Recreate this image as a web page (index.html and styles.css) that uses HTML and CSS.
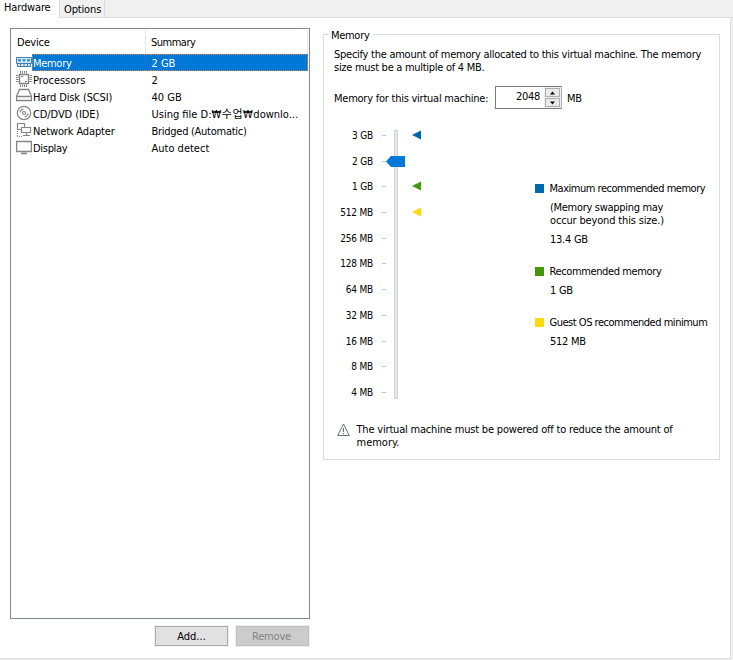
FILE: index.html
```html
<!DOCTYPE html>
<html lang="en">
<head>
<meta charset="utf-8">
<title>Virtual Machine Settings</title>
<link rel="stylesheet" href="styles.css">
</head>
<body>
<nav class="tabs">
  <span class="tab active">Hardware</span>
  <span class="tab">Options</span>
</nav>
<main class="panel">
  <section class="hardware">
    <div class="list">
      <div class="head"><span class="h-device">Device</span><span class="h-summary">Summary</span></div>
      <div class="row selected">
        <svg class="icon" width="16" height="17"><path d="M.5 3.500h15v6H.5zM1.500 9.500v3h13v-3M4.500 10v2M8 10v2M11.500 10v2" fill="#d8e9f6" stroke="#3f7cab"/><path d="M2 5h3v2.500H2zM6.500 5h3v2.500h-3zM11 5h3v2.500h-3z" fill="#3f95d5"/></svg>
        <span class="name"><span class="t-memory">Memory</span></span><span class="summary">2 GB</span>
      </div>
      <div class="row">
        <svg class="icon" width="16" height="17" fill="none" stroke="#858585"><path d="M3.500 3.500h9v9h-9z" stroke-width="1.400"/><path d="M4.500 0v2.500M6.500 0v2.500M8.500 0v2.500M10.500 0v2.500M4.500 13.500V16M6.500 13.500V16M8.500 13.500V16M10.500 13.500V16M0 4.500h2.500M0 6.500h2.500M0 8.500h2.500M0 10.500h2.500M13.500 4.500H16M13.500 6.500H16M13.500 8.500H16M13.500 10.500H16M5 5.500h2M9 10.500h2"/></svg>
        <span class="name"><span class="t-proc">Processors</span></span><span class="summary">2</span>
      </div>
      <div class="row">
        <svg class="icon disk" width="16" height="17" fill="none" stroke="#858585" stroke-width="1.300"><path d="M3.500 2.500h9l3 7v4H.5v-4zM.5 9.500h15"/></svg>
        <span class="name"><span class="t-disk">Hard Disk (SCSI)</span></span><span class="summary">40 GB</span>
      </div>
      <div class="row">
        <svg class="icon" width="16" height="17" fill="none" stroke="#858585" stroke-width="1.200"><circle cx="8" cy="8" r="6.700"/><circle cx="8" cy="8" r="1.500"/><path d="M4 7.500Q4.500 4.500 7.500 4M12 8.500Q11.500 11.500 8.500 12"/></svg>
        <span class="name"><span class="t-cd">CD/DVD (IDE)</span></span><span class="summary t-file">Using file D:<span class="ko">₩수업₩</span>downlo...</span>
      </div>
      <div class="row">
        <svg class="icon" width="16" height="17" fill="none" stroke="#858585" stroke-width="1.200"><path d="M5.500 7.500h-4v-6h7v4M5.500 5.500h9v5h-9zM10.500 10.500v3M7 13.500h7"/><path d="M1.500 9v5M1 14.500h6" stroke-dasharray="1 1"/></svg>
        <span class="name"><span class="t-net">Network Adapter</span></span><span class="summary t-bridge">Bridged (Automatic)</span>
      </div>
      <div class="row">
        <svg class="icon" width="16" height="17" fill="none" stroke="#858585" stroke-width="1.300"><path d="M.6 2.500h14.800v10H.6zM5 14.500h6"/></svg>
        <span class="name"><span class="t-display">Display</span></span><span class="summary t-auto">Auto detect</span>
      </div>
    </div>
    <div class="actions"><button class="btn">Add...</button><button class="btn" disabled>Remove</button></div>
  </section>
  <section class="memory">
    <h2 class="caption">Memory</h2>
    <p class="intro"><span class="t-intro1">Specify the amount of memory allocated to this virtual machine. The memory</span><br><span class="t-intro2">size must be a multiple of 4 MB.</span></p>
    <div class="amount">
      <span class="amount-label">Memory for this virtual machine:</span>
      <div class="spin"><span class="value">2048</span><span class="steps"><i class="step"><svg width="13" height="8"><path d="M4 5.500h5L6.500 2.500z"/></svg></i><i class="step"><svg width="13" height="8"><path d="M4 2.500h5L6.500 5.500z"/></svg></i></span></div>
      <span>MB</span>
    </div>
    <div class="body">
      <div class="scale">
        <div class="labels"><span>3 GB</span><span>2 GB</span><span>1 GB</span><span>512 MB</span><span>256 MB</span><span>128 MB</span><span>64 MB</span><span>32 MB</span><span>16 MB</span><span>8 MB</span><span>4 MB</span></div>
        <div class="track"><svg class="thumb" width="19" height="11"><path d="M0 5.500 5 0h14v11H5z" fill="#0078d7"/></svg></div>
        <div class="marks">
          <svg width="9" height="10"><path d="M0 5 9 .5v9z" fill="#0066ad"/></svg>
          <svg class="mark-rec" width="9" height="10"><path d="M0 5 9 .5v9z" fill="#46970c"/></svg>
          <svg class="mark-min" width="9" height="10"><path d="M0 5 9 .5v9z" fill="#ffda0a"/></svg>
        </div>
      </div>
      <dl class="legend">
        <dt class="max"><span>Maximum recommended memory</span></dt>
        <dd class="note"><span class="t-swap">(Memory swapping may</span><br><span class="t-occur">occur beyond this size.)</span></dd>
        <dd>13.4 GB</dd>
        <dt class="rec"><span>Recommended memory</span></dt>
        <dd>1 GB</dd>
        <dt class="min"><span>Guest OS recommended minimum</span></dt>
        <dd>512 MB</dd>
      </dl>
    </div>
    <div class="warning">
      <svg width="13" height="13" fill="none" stroke="#66727e"><path d="M6.500 1 12.300 12.500H.7z"/><path d="M6.500 5v4M6.500 10v1.300"/></svg>
      <p><span class="t-warn">The virtual machine must be powered off to reduce the amount of</span><br>memory.</p>
    </div>
  </section>
</main>
</body>
</html>
```
FILE: styles.css
```css
* { box-sizing: border-box; }
body {
  margin: 0; width: 733px; height: 660px; overflow: hidden;
  background: #f0f0f0; color: #000;
  font: 11px/13px "DejaVu Sans Condensed", "DejaVu Sans", "Noto Sans CJK KR", sans-serif;
  font-stretch: condensed; white-space: nowrap;
}
p, h2, dl, dd { margin: 0; font-size: 11px; font-weight: normal; }
svg { display: block; flex: none; }
.tabs { display: flex; height: 18px; border-bottom: 1px solid #dcdcdc; }
.tab { width: 45px; height: 17px; padding: 3px 0 0 4px; border-right: 1px solid #dcdcdc; letter-spacing: -.15px; }
.tab.active { width: 60px; height: 18px; padding-top: 1px; background: #fff; }
.panel {
  display: flex; gap: 13px; width: 731px; height: 641px; padding: 10px 0 0 10px;
  background: #fff; border-right: 1px solid #dcdcdc; border-bottom: 1px solid #dcdcdc;
}
.hardware { width: 300px; }
.list { height: 591px; border: 1px solid #828790; padding: 1px 1px 0; }
.head { display: flex; height: 24px; line-height: 25px; border-right: 1px solid #e5e5e5; }
.h-device { width: 134px; padding-left: 5px; border-right: 1px solid #e5e5e5; letter-spacing: -.2px; }
.h-summary { padding-left: 5px; letter-spacing: -.5px; }
.row { display: flex; height: 17px; line-height: 19px; padding-left: 4px; }
.name { width: 119px; padding-left: 1px; }
.summary { flex: 1; padding-left: .5px; }
.selected .name, .selected .summary {
  background: #0078d7; color: #fff; line-height: 17px;
  border: 1px dotted #e08a45; border-left-width: 0; border-right-width: 0;
}
.selected .name { border-left-width: 1px; padding-left: 0; }
.selected .summary { border-right-width: 1px; }
.disk { margin-top: -1px; }
.t-memory, .t-display { letter-spacing: -.3px; }
.t-proc { letter-spacing: -.05px; }
.t-disk, .t-net { letter-spacing: -.13px; }
.t-cd { letter-spacing: -.1px; }
.t-bridge { letter-spacing: -.27px; }
.ko { letter-spacing: .5px; }
.actions { display: flex; justify-content: flex-end; gap: 8px; margin: 7px 1px 0 0; }
.btn {
  width: 73px; height: 20px; padding: 0; border: 1px solid #adadad;
  background: #e1e1e1; color: #000; font: inherit; outline: 1px solid #f0f0f0;
}
.btn:disabled { background: #ccc; border-color: #bfbfbf; color: #838383; padding-right: 2px; letter-spacing: -.2px; }
.memory { width: 397px; height: 426px; margin-top: 6px; border: 1px solid #dcdcdc; padding: 0 0 0 10px; }
.caption { width: 44px; height: 13px; margin: -6px 0 0 -5px; padding-left: 2px; background: #fff; letter-spacing: -.3px; }
.intro { margin-top: 6px; }
.t-intro1 { letter-spacing: -.26px; }
.t-intro2 { letter-spacing: -.28px; }
.amount { display: flex; align-items: center; margin-top: 12px; }
.amount-label { width: 161px; padding-top: 1px; letter-spacing: -.24px; }
.spin { display: flex; width: 67px; height: 23px; margin-right: 5px; border: 1px solid #7a7a7a; border-right-color: #adadad; }
.value { width: 49px; padding-right: 4px; line-height: 20px; text-align: right; letter-spacing: -.3px; }
.spin + span { padding-top: 1px; letter-spacing: -.4px; }
.steps { flex: 1; padding: 1px; background: #f0f0f0; }
.step { display: block; width: 15px; height: 9px; border: 1px solid #adadad; background: #e9e9e9; margin-bottom: 1px; }
.step svg { width: 13px; height: 7px; }
.body { display: flex; height: 283px; margin-top: 20px; }
.scale { display: flex; width: 201px; }
.labels { display: grid; grid-auto-rows: 25.7px; width: 52px; line-height: 13px; font-size: 10px; letter-spacing: -.2px; }
.labels span { display: flex; justify-content: flex-end; gap: 9px; height: 13px; }
.labels span::after { content: ""; width: 4px; height: 1px; margin-top: 6px; background: #bfc3c3; }
.track { position: relative; width: 4px; height: 269px; margin: 1px 14px 0 8px; border: 1px solid #cfd4d4; background: #e4e8e8; }
.thumb { position: absolute; left: -9px; top: 25px; }
.marks { padding-top: 1px; }
.mark-rec { margin-top: 41px; }
.mark-min { margin-top: 16px; }
.legend { padding-top: 53px; }
dt { display: flex; align-items: center; letter-spacing: -.48px; }
dt::before { content: ""; width: 9px; height: 9px; margin-right: 5.5px; background: #0066ad; }
dt.rec, dt.min { margin-top: 19px; }
dt.rec { letter-spacing: -.38px; }
dt.rec::before { background: #46970c; }
dt.min::before { background: #ffda0a; }
dd { padding-left: 15px; margin-top: 6px; letter-spacing: -.25px; }
.t-swap { letter-spacing: -.3px; }
.t-occur { letter-spacing: -.16px; }
.warning { display: flex; gap: 7px; margin: 11px 0 0 2.5px; }
.t-warn { letter-spacing: -.19px; }
```
